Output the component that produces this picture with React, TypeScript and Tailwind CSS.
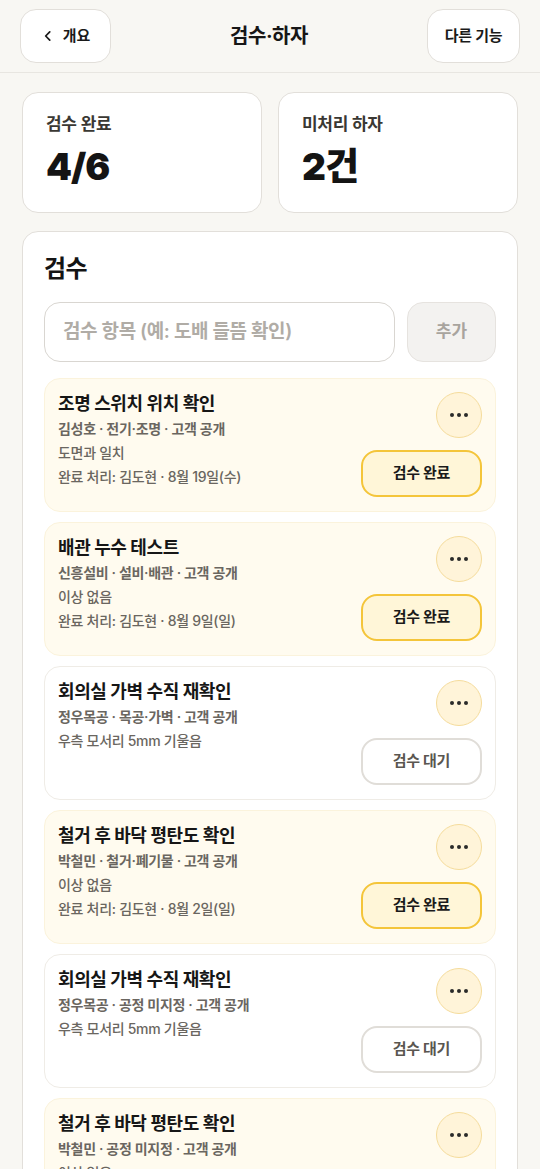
import React from 'react';

type Item = {
  title: string;
  meta: string;
  note: string;
  done?: string;
};

const items: Item[] = [
  { title: '조명 스위치 위치 확인', meta: '김성호 · 전기·조명 · 고객 공개', note: '도면과 일치', done: '완료 처리: 김도현 · 8월 19일(수)' },
  { title: '배관 누수 테스트', meta: '신흥설비 · 설비·배관 · 고객 공개', note: '이상 없음', done: '완료 처리: 김도현 · 8월 9일(일)' },
  { title: '회의실 가벽 수직 재확인', meta: '정우목공 · 목공·가벽 · 고객 공개', note: '우측 모서리 5mm 기울음' },
  { title: '철거 후 바닥 평탄도 확인', meta: '박철민 · 철거·폐기물 · 고객 공개', note: '이상 없음', done: '완료 처리: 김도현 · 8월 2일(일)' },
  { title: '회의실 가벽 수직 재확인', meta: '정우목공 · 공정 미지정 · 고객 공개', note: '우측 모서리 5mm 기울음' },
  { title: '철거 후 바닥 평탄도 확인', meta: '박철민 · 공정 미지정 · 고객 공개', note: '이상 없음', done: '완료 처리: 김도현 · 8월 2일(일)' },
];

// Inter for latin/digits, Noto CJK for hangul (roughly Pretendard)
const font = { fontFamily: 'Inter, "Noto Sans CJK KR", "Noto Sans", sans-serif' };

function CheckItem({ item }: { item: Item }) {
  const done = !!item.done;
  return (
    <div
      className={`flex justify-between rounded-2xl border px-[13px] pt-[13px] pb-[14px] ${
        done ? 'bg-[#fffbef] border-[#fbf3dc]' : 'bg-white border-[#efece6]'
      }`}
    >
      <div className="flex flex-col">
        <div className="text-[18px] font-bold leading-[24px] text-[#161616] tracking-[-0.4px]">{item.title}</div>
        <div className="mt-[1px] text-[14px] font-semibold leading-[24px] text-[#6a6660] tracking-[-0.3px]">{item.meta}</div>
        <div className="text-[14px] font-medium leading-[24px] text-[#6a6660] tracking-[-0.3px]">{item.note}</div>
        {item.done && (
          <div className="text-[14px] font-medium leading-[24px] text-[#6a6660] tracking-[-0.3px]">{item.done}</div>
        )}
      </div>
      <div className="flex flex-col items-end gap-3 shrink-0">
        <button className="w-[46px] h-[46px] rounded-full bg-[#fff4d9] border border-[#f5dc9c] flex items-center justify-center gap-[3px]">
          <span className="w-[4px] h-[4px] rounded-full bg-[#2a2a2a]" />
          <span className="w-[4px] h-[4px] rounded-full bg-[#2a2a2a]" />
          <span className="w-[4px] h-[4px] rounded-full bg-[#2a2a2a]" />
        </button>
        {done ? (
          <button className="w-[121px] h-[47px] rounded-2xl bg-[#fff6d8] border-2 border-[#f4c53a] text-[15px] font-bold text-[#1a1a1a] tracking-[-0.3px]">
            검수 완료
          </button>
        ) : (
          <button className="w-[121px] h-[47px] rounded-2xl bg-white border-2 border-[#e0ddd8] text-[15px] font-bold text-[#5a5650] tracking-[-0.3px]">
            검수 대기
          </button>
        )}
      </div>
    </div>
  );
}

export default function App() {
  return (
    <div className="min-h-screen bg-[#f8f7f3]" style={font}>
      {/* Header */}
      <div className="h-[73px] flex items-center justify-between px-5 border-b border-[#e8e6e1]">
        <button className="w-[91px] h-[54px] rounded-2xl bg-white border border-[#e2dfda] flex items-center justify-center gap-2 text-[15px] font-semibold text-[#1a1a1a]">
          <svg width="14" height="14" viewBox="0 0 24 24" fill="none" stroke="#1a1a1a" strokeWidth="3" strokeLinecap="round" strokeLinejoin="round">
            <path d="M15 5l-7 7 7 7" />
          </svg>
          개요
        </button>
        <div className="text-[20px] font-bold text-[#161616] tracking-[-0.5px]">검수·하자</div>
        <button className="w-[93px] h-[54px] rounded-2xl bg-white border border-[#e2dfda] text-[15px] font-semibold text-[#1a1a1a] tracking-[-0.3px]">
          다른 기능
        </button>
      </div>

      <div className="px-[22px] pt-[19px] flex flex-col gap-[18px]">
        {/* Stats */}
        <div className="grid grid-cols-2 gap-[16px]">
          <div className="h-[121px] rounded-2xl bg-white border border-[#e2dfda] px-[23px] pt-[19px]">
            <div className="text-[17px] font-semibold text-[#3a3833] tracking-[-0.3px]">검수 완료</div>
            <div className="mt-[5px] text-[37px] font-black text-[#141414] leading-[48px] tracking-[-1px]">4/6</div>
          </div>
          <div className="h-[121px] rounded-2xl bg-white border border-[#e2dfda] px-[23px] pt-[19px]">
            <div className="text-[17px] font-semibold text-[#3a3833] tracking-[-0.3px]">미처리 하자</div>
            <div className="mt-[5px] text-[37px] font-black text-[#141414] leading-[48px] tracking-[-1px]">2건</div>
          </div>
        </div>

        {/* Inspection */}
        <div className="rounded-2xl bg-white border border-[#e2dfda] px-[21px] pt-[20px] pb-6">
          <div className="text-[24px] font-bold text-[#141414] leading-[34px] tracking-[-0.5px]">검수</div>
          <div className="mt-[16px] flex gap-3">
            <div className="flex-1 h-[60px] rounded-2xl border border-[#d9d6d1] bg-white flex items-center px-[18px] text-[19px] font-semibold text-[#b0aca6] tracking-[-0.4px]">
              검수 항목 (예: 도배 들뜸 확인)
            </div>
            <button className="w-[89px] h-[60px] rounded-2xl bg-[#f3f2f0] border border-[#e6e3df] text-[17px] font-semibold text-[#a8a49e]">
              추가
            </button>
          </div>
          <div className="mt-[16px] flex flex-col gap-[10px]">
            {items.map((it, i) => (
              <CheckItem key={i} item={it} />
            ))}
          </div>
        </div>
      </div>
    </div>
  );
}
